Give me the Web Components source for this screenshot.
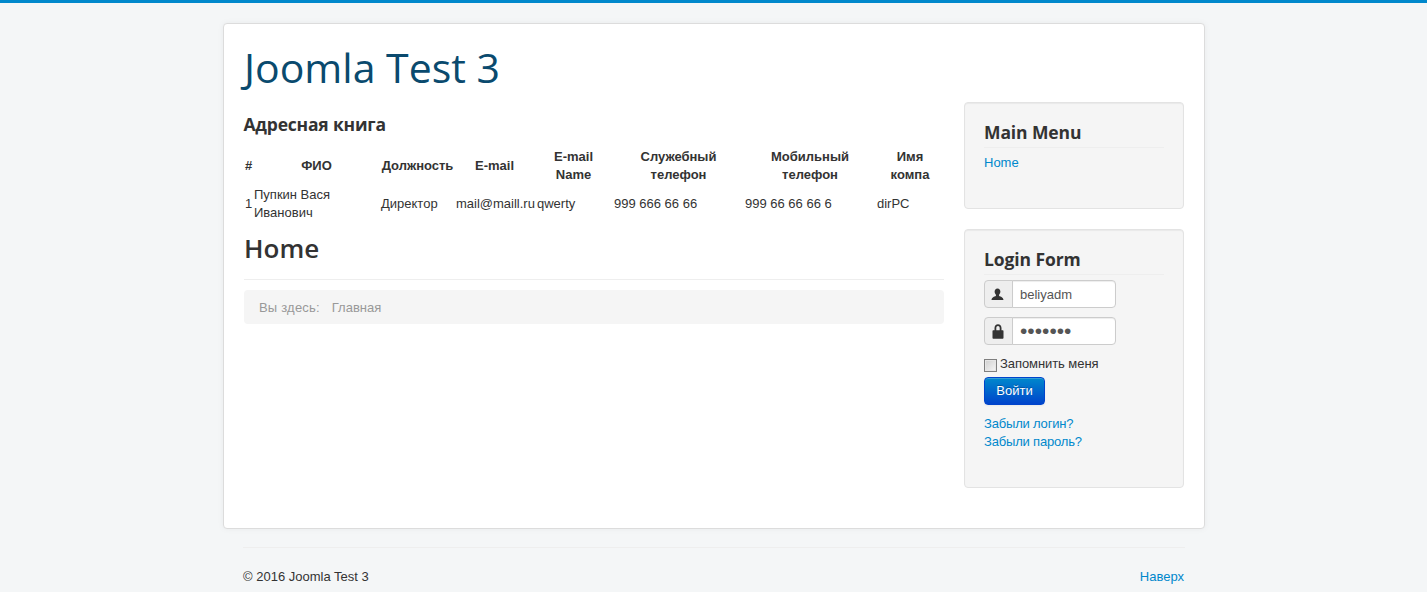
<!DOCTYPE html>
<html lang="ru"><head><meta charset="utf-8"><title>Joomla Test 3</title>
<style>
html,body{margin:0;padding:0}
body{background:#f4f6f7;border-top:3px solid #0088cc;font:13px/18px "Liberation Sans",Arial,sans-serif;color:#333;height:589px;overflow:hidden}
</style></head><body>
<jt-page>
  <jt-card>
    <jt-brand slot="brand">Joomla Test 3</jt-brand>
    <jt-main slot="main">
      <jt-contacts></jt-contacts>
      <jt-home></jt-home>
    </jt-main>
    <jt-well slot="side" heading="Main Menu" pad="36"><jt-link style="padding-top:1px">Home</jt-link></jt-well>
    <jt-well slot="side" heading="Login Form" pad="36"><jt-login></jt-login></jt-well>
  </jt-card>
  <jt-foot></jt-foot>
</jt-page>
<script>
function def(name,html,init){
  customElements.define(name,class extends HTMLElement{
    constructor(){super();this.attachShadow({mode:'open'}).innerHTML=html;}
    connectedCallback(){if(init)init(this);}
  });
}
def('jt-page',`<style>:host{display:block;width:982px;margin:20px auto 0 223px}</style><slot></slot>`);
def('jt-card',`<style>
:host{display:block;box-sizing:border-box;height:506px;background:#fff;border:1px solid #dcdcdc;border-radius:4px;padding:20px 20px 0;box-shadow:0 0 6px rgba(0,0,0,.05)}
.cols{display:grid;grid-template-columns:700px 220px;column-gap:20px;margin-top:10px}
.side{display:flex;flex-direction:column;gap:20px}
</style><slot name="brand"></slot><div class="cols"><div><slot name="main"></slot></div><div class="side"><slot name="side"></slot></div></div>`);
def('jt-brand',`<style>:host{display:block;font:500 41px/46px "Open Sans",sans-serif;color:#0a4a6e;height:48px}</style><slot></slot>`);
def('jt-main',`<style>:host{display:block}</style><slot></slot>`);
def('jt-contacts',`<style>
:host{display:block}
h2{margin:0 0 0 -.5px;padding-top:10px;font:700 17.5px/24px "Open Sans",sans-serif;letter-spacing:-.2px;color:#333;height:26px}
table{border-collapse:collapse;table-layout:fixed;width:700px;margin-top:9px}
th,td{padding:1px;font-size:13px;line-height:18px;text-align:left}
th{font-weight:700;text-align:center}
th.s{padding-right:3px}
.c{text-align:center}
</style>
<h2>Адресная книга</h2>
<table>
<colgroup><col style="width:9px"><col style="width:127px"><col style="width:75px"><col style="width:81px"><col style="width:77px"><col style="width:131px"><col style="width:132px"><col style="width:68px"></colgroup>
<thead><tr><th>#</th><th>ФИО</th><th>Должность</th><th class="s">E-mail</th><th class="s">E-mail<br>Name</th><th>Служебный<br>телефон</th><th>Мобильный<br>телефон</th><th>Имя<br>компа</th></tr></thead>
<tbody><tr><td class="c">1</td><td>Пупкин Вася<br>Иванович</td><td>Директор</td><td>mail@maill.ru</td><td>qwerty</td><td>999 666 66 66</td><td>999 66 66 66 6</td><td>dirPC</td></tr></tbody>
</table>`);
def('jt-home',`<style>
:host{display:block}
h1{margin:0;font:600 26px/50px "Open Sans",sans-serif;color:#333;height:56px;border-bottom:1px solid #eee;box-sizing:content-box}
nav{margin-top:10px;height:34px;box-sizing:border-box;background:#f5f5f5;border-radius:4px;padding:9px 15px 7px;color:#999;display:flex;gap:12px}
nav span:first-child{letter-spacing:.2px}
</style><h1>Home</h1><nav><span>Вы здесь:</span><span>Главная</span></nav>`);
def('jt-link',`<style>:host{display:block;color:#0088cc;cursor:pointer}</style><slot></slot>`);
def('jt-well',`<style>
:host{display:block;box-sizing:border-box;background:#f5f5f5;border:1px solid #e3e3e3;border-radius:4px;padding:19px;box-shadow:inset 0 1px 1px rgba(0,0,0,.05)}
h3{margin:0 0 5px;font:700 17.5px/20px "Open Sans",sans-serif;letter-spacing:-.1px;color:#333;border-bottom:1px solid #eee;padding-bottom:5px}
</style><h3></h3><slot></slot>`,el=>{
  el.shadowRoot.querySelector('h3').textContent=el.getAttribute('heading');
  el.style.paddingBottom=el.getAttribute('pad')+'px';
});
def('jt-login',`<style>
:host{display:block}
.group{display:flex;width:132px;height:28px;margin-bottom:9px;box-sizing:border-box}
.add{box-sizing:border-box;width:29px;height:28px;padding-right:2px;display:flex;align-items:center;justify-content:center;background:#eee;border:1px solid #ccc;border-radius:4px 0 0 4px}
input.f{box-sizing:border-box;width:104px;height:28px;margin:0 0 0 -1px;border:1px solid #ccc;border-radius:0 4px 4px 0;background:#fff;color:#555;padding:4px 7px;font:13px/18px "Liberation Sans",sans-serif;outline:0;box-shadow:inset 0 1px 1px rgba(0,0,0,.075)}
input[type=password]{font-size:21px;padding-bottom:5px}
label{display:flex;align-items:center;height:18px;margin-top:10px;color:#333}
input[type=checkbox]{appearance:none;box-sizing:border-box;width:13px;height:13px;margin:2px 3px 0 0;border:1px solid #7f7f7f;background:linear-gradient(135deg,#cfcfcf,#f6f6f6);box-shadow:inset 0 0 0 1px #e6e6e6}
button{display:block;box-sizing:border-box;width:61px;height:28px;margin-top:4px;border:1px solid #0044cc;border-radius:4px;color:#fff;font:13px/18px "Liberation Sans",sans-serif;background:linear-gradient(#0088cc,#0044cc);text-shadow:0 -1px 0 rgba(0,0,0,.25);box-shadow:inset 0 1px 0 rgba(255,255,255,.2),0 1px 2px rgba(0,0,0,.05);padding:0}
.links{margin-top:10px;letter-spacing:-.18px}
</style>
<div class="group"><span class="add"><svg width="13" height="13" viewBox="0 0 14 14"><path fill="#333" d="M7 .5C5 .5 3.900 2 3.900 3.900c0 1.400.6 2.700 1.400 3.400v1.200C3.400 9.100.9 9.800.5 13h13c-.4-3.200-2.900-3.900-4.800-4.500V7.300c.8-.7 1.400-2 1.400-3.400C10.100 2 9 .5 7 .5z"/></svg></span><input class="f" type="text" value="beliyadm"></div>
<div class="group"><span class="add"><svg width="12" height="15" viewBox="0 0 12 15"><path fill="#333" fill-rule="evenodd" d="M6 .3C3.900.3 2.500 1.800 2.500 4v2.200H1.200C.8 6.200.5 6.500.5 6.900v6.900c0 .5.300.9.700.9h9.600c.4 0 .7-.4.700-.9V6.900c0-.4-.3-.7-.7-.7H9.500V4C9.500 1.800 8.100.3 6 .3zM4.300 6.200V4c0-1.200.7-2 1.700-2s1.700.8 1.700 2v2.200H4.300z"/></svg></span><input class="f" type="password" value="1234567"></div>
<label><input type="checkbox"><span style="letter-spacing:-.07px">Запомнить меня</span></label>
<button>Войти</button>
<div class="links"><jt-link>Забыли логин?</jt-link><jt-link>Забыли пароль?</jt-link></div>`);
def('jt-foot',`<style>
:host{display:block;margin:18px 20px 0;border-top:1px solid #eee;padding-top:20px;color:#333}
div{display:flex;justify-content:space-between}
a{color:#0088cc;text-decoration:none;margin-right:1px}
</style><div><span>© 2016 Joomla Test 3</span><a href="#top">Наверх</a></div>`);
</script>
</body></html>
